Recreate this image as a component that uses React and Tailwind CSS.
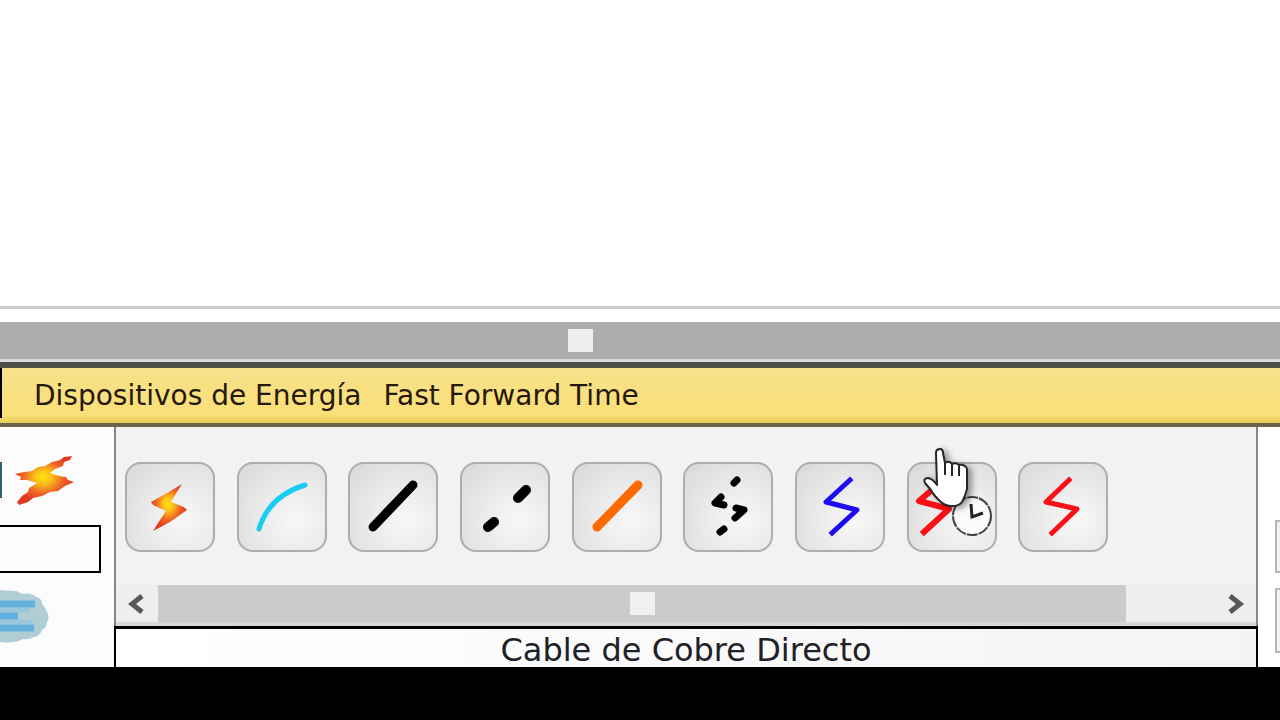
import React from "react";

function FireBolt({ id, points, className, viewBox }) {
  return (
    <svg className={className} viewBox={viewBox} aria-hidden="true">
      <defs>
        <radialGradient id={id} cx="0.48" cy="0.43" r="0.5">
          <stop offset="0" stopColor="#ffe80a" />
          <stop offset="0.3" stopColor="#f9bd1a" />
          <stop offset="0.65" stopColor="#f06a25" />
          <stop offset="1" stopColor="#e23a22" />
        </radialGradient>
      </defs>
      <polygon points={points} fill={`url(#${id})`} />
    </svg>
  );
}

function Glyph({ children }) {
  return (
    <svg
      viewBox="0 0 90 90"
      className="h-full w-full overflow-visible"
      fill="none"
      strokeLinejoin="miter"
      aria-hidden="true"
    >
      {children}
    </svg>
  );
}

const tools = [
  {
    name: "Conexión automática",
    icon: (
      <FireBolt
        id="bolt-auto"
        viewBox="0 0 90 90"
        className="h-full w-full"
        points="57,22 42,31 26,40 28,43 41,49 35,58 28,69 45,60 62,48 59,45 46,40 50,33"
      />
    ),
  },
  {
    name: "Consola",
    icon: (
      <Glyph>
        <path d="M22 67 Q32 34 68 23" stroke="#19cdf0" strokeWidth="5" strokeLinecap="round" />
      </Glyph>
    ),
  },
  {
    name: "Cable de Cobre Directo",
    icon: (
      <Glyph>
        <path d="M25 65 L65 23" stroke="#000" strokeWidth="9" strokeLinecap="round" />
      </Glyph>
    ),
  },
  {
    name: "Cable Cruzado",
    icon: (
      <Glyph>
        <path d="M28 65 L34 60 M58 36 L66 28" stroke="#000" strokeWidth="10" strokeLinecap="round" />
      </Glyph>
    ),
  },
  {
    name: "Fibra",
    icon: (
      <Glyph>
        <path d="M25 65 L66 23" stroke="#ff6a00" strokeWidth="9" strokeLinecap="round" />
      </Glyph>
    ),
  },
  {
    name: "Teléfono",
    icon: (
      <Glyph>
        <path
          d="M51 21 L54 18 M38 35 L32 41 L41 43 M53 46 L61 48 L52 56 M37 70 L41 67"
          stroke="#000"
          strokeWidth="7"
          strokeLinecap="round"
          strokeLinejoin="round"
        />
      </Glyph>
    ),
  },
  {
    name: "Coaxial",
    icon: (
      <Glyph>
        <path
          d="M55 18 L31 40 L62 48 L37 71"
          stroke="#1c0cf2"
          strokeWidth="5"
          strokeLinecap="square"
          strokeLinejoin="round"
        />
      </Glyph>
    ),
  },
  {
    name: "Serial DCE",
    icon: (
      <Glyph>
        <path
          d="M26 27 L12 39 L42 47 L17 70"
          stroke="#fb1018"
          strokeWidth="6"
          strokeLinecap="square"
          strokeLinejoin="round"
        />
        <circle cx="65" cy="54" r="19" fill="#fbfbfb" stroke="#444" strokeWidth="2" strokeDasharray="11 1" />
        <path d="M64 42 L65 55 L76 51" stroke="#222" strokeWidth="3" />
      </Glyph>
    ),
  },
  {
    name: "Serial DTE",
    icon: (
      <Glyph>
        <path
          d="M51 18 L28 40 L59 47 L34 71"
          stroke="#fb1018"
          strokeWidth="5"
          strokeLinecap="square"
          strokeLinejoin="round"
        />
      </Glyph>
    ),
  },
];

function HandCursor() {
  return (
    <svg
      viewBox="0 0 54 66"
      className="pointer-events-none absolute -top-[18px] left-3 h-[66px] w-[54px] drop-shadow-[4px_2px_3px_rgba(0,0,0,0.4)]"
      fill="none"
      aria-hidden="true"
    >
      <path
        d="M17 9 Q17 5 21 5 Q24 5 24 9 L26 19 Q30 16 33 20 Q37 18 40 21 Q46 20 48 25 L48 45 Q46 53 43 58 Q40 62 33 62 Q26 62 22 58 Q15 52 12 46 L6 39 Q4 34 9 34 Q14 35 18 41 Z"
        fill="#fff"
        stroke="#262626"
        strokeWidth="2"
        strokeLinejoin="round"
      />
      <path d="M26 18 V31 M33 20 V32 M40 21 V32" stroke="#262626" strokeWidth="2" />
    </svg>
  );
}

function Arrow({ label, path }) {
  return (
    <button aria-label={label} className="flex h-full w-[42px] items-center justify-center">
      <svg viewBox="0 0 18 20" className="h-5 w-[18px]" fill="none" aria-hidden="true">
        <path d={path} stroke="#585858" strokeWidth="5" />
      </svg>
    </button>
  );
}

export default function App() {
  return (
    <div className="flex min-h-screen flex-col bg-white font-['DejaVu_Sans',sans-serif] text-[#26180c]">
      <main className="min-h-40 flex-1 border-b-3 border-[#cbcbcb]" />

      <div className="mt-[13px] h-[37px] bg-[#adadad] pt-[7px]">
        <div className="ml-[568px] h-[23px] w-[25px] bg-[#eeeeee]" />
      </div>
      <div className="h-[3px] bg-[#dcdce0]" />

      <header className="flex h-[65px] items-center gap-[22px] border-t-[6px] border-b-4 border-t-[#504e48] border-b-[#69644f] bg-linear-to-b from-[#f6e28b] via-[#fbdf77] via-85% to-[#e6cd54] text-[28px] leading-8">
        <div className="h-full w-3 pb-[5px]">
          <div className="h-full w-0.5 bg-black" />
        </div>
        <button>Dispositivos de Energía</button>
        <button>Fast Forward Time</button>
      </header>

      <div className="flex h-60 bg-[#fcfcfd]">
        <aside className="w-[114px] shrink-0 pt-7">
          <div className="flex h-[50px] items-center gap-3">
            <div className="h-9 w-0.5 bg-[#286078]" />
            <button aria-label="Conexiones">
              <FireBolt
                id="bolt-category"
                viewBox="0 0 62 50"
                className="h-[50px] w-[62px]"
                points="58,1 50,2 46,5 38,7 31,11 24,12 18,16 10,17 1,19 7,22 6,25 13,25 23,28 15,33 14,37 8,41 3,47 5,50 14,47 19,43 28,41 36,37 44,36 51,31 60,27 54,25 52,22 45,21 36,18 41,14 49,11 50,7 56,5"
              />
            </button>
          </div>
          <input
            aria-label="Nombre del dispositivo"
            className="mt-5 block h-12 w-[101px] border-2 border-l-0 border-black bg-[#fdfdfd] px-2 text-xl outline-none"
          />
          <button aria-label="Nube" className="mt-4 block">
            <svg viewBox="0 0 50 54" className="h-[54px] w-[50px]" aria-hidden="true">
              <path
                d="M0 1 L16 2 L23 5 Q31 3 36 8 Q42 9 42 15 Q46 19 47 23 Q50 28 47 33 Q47 38 42 41 Q40 47 34 48 Q28 51 23 50 Q14 55 0 53 Z"
                fill="#b0cdd6"
              />
              <path d="M0 21 H30 M0 33 H33" stroke="#98c8dc" strokeWidth="4" />
              <path d="M0 15 H35 M0 27 H18 M0 39 H34" stroke="#62b1df" strokeWidth="7" />
            </svg>
          </button>
        </aside>

        <section className="flex min-w-0 flex-1 flex-col">
          <div className="flex h-[199px] flex-col border-x-2 border-[#858585] bg-[#f2f2f2]">
            <div className="grid h-[158px] grid-cols-9 pt-[35px] pr-[126px] pl-[9px]">
              {tools.map((tool) => (
                <div key={tool.name} className="relative">
                  <button
                    aria-label={tool.name}
                    className="block size-[90px] overflow-hidden rounded-[16px] bg-[radial-gradient(circle_at_65%_65%,#f8f8f8,#e5e5e5_60%,#d7d7d7)] shadow-[inset_0_0_0_2px_#adadad]"
                  >
                    {tool.icon}
                  </button>
                  {tool.name === "Serial DCE" && <HandCursor />}
                </div>
              ))}
            </div>
            <div className="flex h-[37px] items-center bg-[#eeeeee]">
              <Arrow label="Desplazar a la izquierda" path="M14 2 L4 10 L14 18" />
              <div className="flex h-full flex-1 items-center justify-center bg-[#cbcbcb]">
                <div className="h-[23px] w-[25px] bg-[#f0f0f0]" />
              </div>
              <div className="flex h-full w-[130px] justify-end">
                <Arrow label="Desplazar a la derecha" path="M4 2 L14 10 L4 18" />
              </div>
            </div>
            <div className="h-1 bg-[#d8d8d8]" />
          </div>
          <div className="flex flex-1 items-center justify-center border-2 border-t-3 border-b-0 border-black bg-linear-to-r from-white to-[#f4f4f4] pt-1 text-[32px] leading-8 text-[#202028]">
            <p>Cable de Cobre Directo</p>
          </div>
        </section>

        <div className="w-[22px] shrink-0 overflow-hidden bg-white pt-[93px] pl-[17px]">
          <button aria-label="Escenario" className="block h-[53px] w-16 border-2 border-[#b5b5b5] bg-[#f3f3f3]" />
          <button aria-label="Nuevo" className="mt-[15px] block h-[65px] w-16 border-2 border-[#b5b5b5] bg-[#f3f3f3]" />
        </div>
      </div>

      <footer className="h-[53px] bg-black" />
    </div>
  );
}
